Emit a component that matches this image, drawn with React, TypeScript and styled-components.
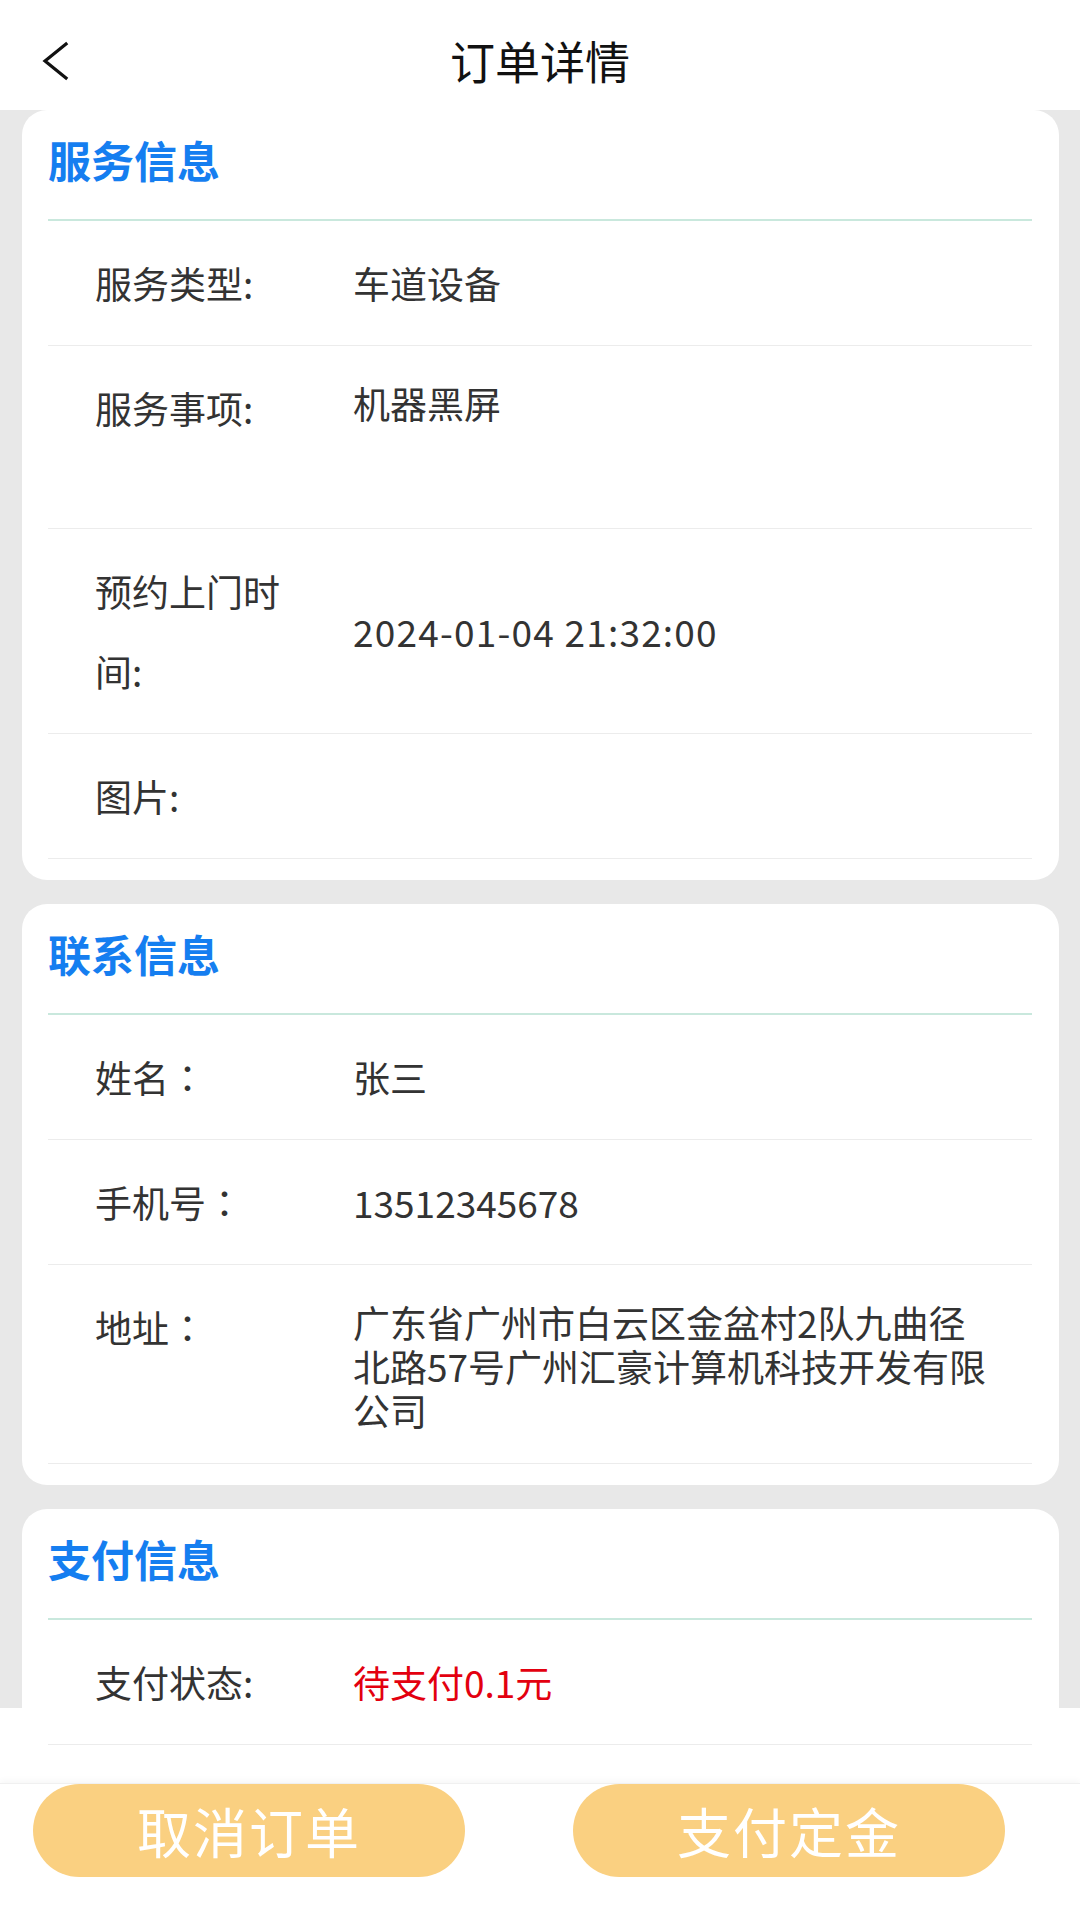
import React from "react";
import styled, { createGlobalStyle } from "styled-components";

const GlobalStyle = createGlobalStyle`
  html, body {
    margin: 0;
    padding: 0;
    background: #ffffff;
    font-family: "Noto Sans CJK SC", "Noto Sans", sans-serif;
  }
  * { box-sizing: border-box; }
`;

const Page = styled.div`
  position: relative;
  width: 1080px;
  height: 1920px;
  overflow: hidden;
  background: #ffffff;
`;

const Header = styled.header`
  height: 110px;
  padding-top: 12px;
  display: grid;
  grid-template-columns: 120px 1fr 120px;
  align-items: center;
  background: #ffffff;
`;

const BackButton = styled.button`
  border: none;
  background: transparent;
  padding: 0 0 0 40px;
  height: 98px;
  display: flex;
  align-items: center;
  cursor: pointer;
`;

const HeaderTitle = styled.h1`
  margin: 0;
  text-align: center;
  font-size: 45px;
  font-weight: 400;
  color: #111111;
  line-height: 98px;
`;

const Content = styled.main`
  height: 1598px;
  background: #e8e8e8;
  padding: 0 21px 0 22px;
  display: flex;
  flex-direction: column;
  gap: 24px;
`;

const Card = styled.section`
  flex-shrink: 0;
  background: #ffffff;
  border-radius: 25px;
  padding: 0 27px 21px 26px;
`;

const CardTitle = styled.h2`
  margin: 0;
  height: 111px;
  padding-bottom: 12px;
  display: flex;
  align-items: center;
  border-bottom: 2px solid #c9e8dd;
  font-size: 43px;
  font-weight: 700;
  color: #157ef0;
`;

const Row = styled.div<{ $top?: boolean }>`
  display: flex;
  align-items: ${(p) => (p.$top ? "flex-start" : "center")};
  padding: 22px 0 22px 47px;
  border-bottom: 1px solid #ececec;
`;

const Label = styled.div`
  width: 200px;
  flex-shrink: 0;
  margin-right: 58px;
  font-size: 37px;
  line-height: 80px;
  color: #333333;
`;

const Colon = styled.span`
  font-family: "Noto Sans CJK TC", "Noto Sans CJK SC", sans-serif;
`;

const Value = styled.div<{ $top?: boolean; $minHeight?: number; $red?: boolean; $wide?: boolean }>`
  flex: 1;
  padding-right: 35px;
  padding-top: ${(p) => (p.$top ? "13px" : "0")};
  padding-bottom: ${(p) => (p.$top ? "9px" : "0")};
  min-height: ${(p) => (p.$minHeight ? `${p.$minHeight}px` : "auto")};
  font-size: 37px;
  line-height: 44px;
  letter-spacing: ${(p) => (p.$wide ? "1.2px" : "0")};
  color: ${(p) => (p.$red ? "#e3000f" : "#333333")};
`;

const Footer = styled.footer`
  position: absolute;
  left: 0;
  right: 0;
  bottom: 0;
  height: 137px;
  background: #ffffff;
  border-top: 1px solid #f0f0f0;
  box-shadow: 0 -3px 6px rgba(0, 0, 0, 0.03);
  display: flex;
  justify-content: space-between;
  align-items: flex-start;
  padding: 0 75px 0 33px;
`;

const ActionButton = styled.button`
  width: 432px;
  height: 93px;
  border: none;
  border-radius: 47px;
  background: #fad081;
  color: #ffffff;
  font-family: "Noto Sans CJK SC", "Noto Sans", sans-serif;
  font-size: 54px;
  font-weight: 400;
  letter-spacing: 2px;
  cursor: pointer;
`;

type Item = {
  label: string;
  colon: string;
  value: string;
  top?: boolean;
  minHeight?: number;
  red?: boolean;
  wide?: boolean;
};

const sections: { title: string; items: Item[] }[] = [
  {
    title: "服务信息",
    items: [
      { label: "服务类型", colon: ":", value: "车道设备" },
      { label: "服务事项", colon: ":", value: "机器黑屏", top: true, minHeight: 138 },
      { label: "预约上门时间", colon: ":", value: "2024-01-04 21:32:00", wide: true },
      { label: "图片", colon: ":", value: "" },
    ],
  },
  {
    title: "联系信息",
    items: [
      { label: "姓名", colon: "：", value: "张三" },
      { label: "手机号", colon: "：", value: "13512345678" },
      {
        label: "地址",
        colon: "：",
        value: "广东省广州市白云区金盆村2队九曲径北路57号广州汇豪计算机科技开发有限公司",
        top: true,
      },
    ],
  },
  {
    title: "支付信息",
    items: [{ label: "支付状态", colon: ":", value: "待支付0.1元", red: true }],
  },
];

function BackIcon() {
  return (
    <svg width="30" height="44" viewBox="0 0 30 44" fill="none">
      <path d="M26 5 L5 22 L26 39" stroke="#111" strokeWidth="3.2" strokeLinecap="square" strokeLinejoin="miter" />
    </svg>
  );
}

export default function App() {
  return (
    <>
      <GlobalStyle />
      <Page>
        <Header>
          <BackButton aria-label="返回">
            <BackIcon />
          </BackButton>
          <HeaderTitle>订单详情</HeaderTitle>
          <div />
        </Header>
        <Content>
          {sections.map((s) => (
            <Card key={s.title}>
              <CardTitle>{s.title}</CardTitle>
              {s.items.map((it, i) => (
                <Row key={i} $top={it.top}>
                  <Label>
                    {it.label}
                    {it.colon === "：" ? <Colon>{it.colon}</Colon> : it.colon}
                  </Label>
                  <Value $top={it.top} $minHeight={it.minHeight} $red={it.red} $wide={it.wide}>
                    {it.value}
                  </Value>
                </Row>
              ))}
            </Card>
          ))}
        </Content>
        <Footer>
          <ActionButton>取消订单</ActionButton>
          <ActionButton>支付定金</ActionButton>
        </Footer>
      </Page>
    </>
  );
}
